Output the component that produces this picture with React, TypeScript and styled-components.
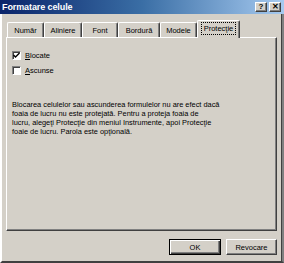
import React from "react";
import styled, { createGlobalStyle } from "styled-components";

const GlobalStyle = createGlobalStyle`
  html, body {
    margin: 0;
    padding: 0;
    background: #d4d0c8;
  }
  * {
    box-sizing: border-box;
  }
`;

const tabs = ["Număr", "Aliniere", "Font", "Bordură", "Modele", "Protecţie"];
const tabWidths = [37, 38, 36, 42, 37, 43];

const Window = styled.div`
  width: 284px;
  height: 263px;
  display: flex;
  flex-direction: column;
  background: #d4d0c8;
  font-family: "Liberation Sans", Arial, sans-serif;
  font-size: 7.5px;
  color: #000;
  overflow: hidden;
`;

const TitleBar = styled.div`
  height: 14px;
  flex-shrink: 0;
  display: flex;
  align-items: center;
  justify-content: space-between;
  padding: 0 3px 0 2px;
  background: linear-gradient(to right, #0a246a 0%, #3a6ea5 50%, #a6caf0 100%);
`;

const Title = styled.span`
  color: #fff;
  font-weight: bold;
  font-size: 9px;
  letter-spacing: -0.1px;
`;

const TitleButtons = styled.div`
  display: flex;
  gap: 2px;
`;

const TitleButton = styled.div`
  width: 12px;
  height: 10px;
  background: #d4d0c8;
  border: 1px solid;
  border-color: #fff #404040 #404040 #fff;
  box-shadow: inset -1px -1px 0 #808080;
  display: flex;
  align-items: center;
  justify-content: center;
  font-weight: bold;
  font-size: 8px;
  line-height: 1;
`;

const Body = styled.div`
  flex: 1;
  display: flex;
  flex-direction: column;
  padding: 7px 5px 6px 4px;
  border-left: 2px solid #fff;
  border-right: 2px solid #808080;
  border-bottom: 2px solid #404040;
  box-shadow: inset -1px 0 0 #404040;
`;

const TabRow = styled.div`
  display: flex;
  align-items: flex-end;
  height: 16px;
  padding-left: 1px;
  position: relative;
  z-index: 1;
`;

const Tab = styled.div<{ $active?: boolean; $w: number }>`
  width: ${(p) => p.$w}px;
  height: ${(p) => (p.$active ? 18 : 15)}px;
  margin-bottom: ${(p) => (p.$active ? -1 : 0)}px;
  display: flex;
  align-items: center;
  justify-content: center;
  background: #d4d0c8;
  border-top: 1px solid #fff;
  border-left: 1px solid #fff;
  border-right: 1px solid #404040;
  box-shadow: inset -1px 0 0 #808080;
  border-radius: 2px 2px 0 0;
  padding-bottom: ${(p) => (p.$active ? 2 : 0)}px;
`;

const FocusLabel = styled.span<{ $active?: boolean }>`
  padding: 1px 2px;
  outline: ${(p) => (p.$active ? "1px dotted #000" : "none")};
  outline-offset: 0;
`;

const Panel = styled.div`
  height: 194px;
  border-top: 1px solid #fff;
  border-left: 1px solid #fff;
  border-right: 1px solid #404040;
  border-bottom: 1px solid #404040;
  box-shadow: inset -1px -1px 0 #808080;
  padding: 13px 6px 0 5px;
  display: flex;
  flex-direction: column;
`;

const CheckRow = styled.label`
  display: flex;
  align-items: center;
  gap: 4px;
  height: 9px;
  margin-bottom: 6px;
`;

const Box = styled.span`
  width: 9px;
  height: 9px;
  background: #fff;
  border-top: 1px solid #808080;
  border-left: 1px solid #808080;
  border-right: 1px solid #fff;
  border-bottom: 1px solid #fff;
  box-shadow: inset 1px 1px 0 #404040;
  display: flex;
  align-items: center;
  justify-content: center;
`;

const Key = styled.span`
  text-decoration: underline;
`;

const Note = styled.p`
  margin: 19px 0 0 0;
  line-height: 9.1px;
  font-size: 7.4px;
`;

const Footer = styled.div`
  display: flex;
  justify-content: flex-end;
  gap: 5px;
  margin-top: 8px;
  padding-right: 0;
`;

const Button = styled.div<{ $default?: boolean }>`
  width: ${(p) => (p.$default ? 52 : 51)}px;
  height: 16px;
  display: flex;
  align-items: center;
  justify-content: center;
  background: #d4d0c8;
  border: 1px solid;
  border-color: ${(p) =>
    p.$default ? "#000" : "#fff #404040 #404040 #fff"};
  box-shadow: ${(p) =>
    p.$default
      ? "inset 1px 1px 0 #fff, inset -1px -1px 0 #404040, inset -2px -2px 0 #808080"
      : "inset -1px -1px 0 #808080"};
`;

function Check() {
  return (
    <svg width="7" height="7" viewBox="0 0 7 7">
      <path d="M0.5 3 L2.5 5 L6.5 1" stroke="#000" strokeWidth="1.4" fill="none" />
    </svg>
  );
}

export default function App() {
  return (
    <>
      <GlobalStyle />
      <Window>
        <TitleBar>
          <Title>Formatare celule</Title>
          <TitleButtons>
            <TitleButton>?</TitleButton>
            <TitleButton>✕</TitleButton>
          </TitleButtons>
        </TitleBar>
        <Body>
          <TabRow>
            {tabs.map((t, i) => (
              <Tab key={t} $w={tabWidths[i]} $active={i === tabs.length - 1}>
                <FocusLabel $active={i === tabs.length - 1}>{t}</FocusLabel>
              </Tab>
            ))}
          </TabRow>
          <Panel>
            <CheckRow>
              <Box>
                <Check />
              </Box>
              <span>
                <Key>B</Key>locate
              </span>
            </CheckRow>
            <CheckRow>
              <Box />
              <span>
                <Key>A</Key>scunse
              </span>
            </CheckRow>
            <Note>
              Blocarea celulelor sau ascunderea formulelor nu are efect dacă
              <br />
              foaia de lucru nu este protejată. Pentru a proteja foaia de
              <br />
              lucru, alegeţi Protecţie din meniul Instrumente, apoi Protecţie
              <br />
              foaie de lucru. Parola este opţională.
            </Note>
          </Panel>
          <Footer>
            <Button $default>OK</Button>
            <Button>Revocare</Button>
          </Footer>
        </Body>
      </Window>
    </>
  );
}
